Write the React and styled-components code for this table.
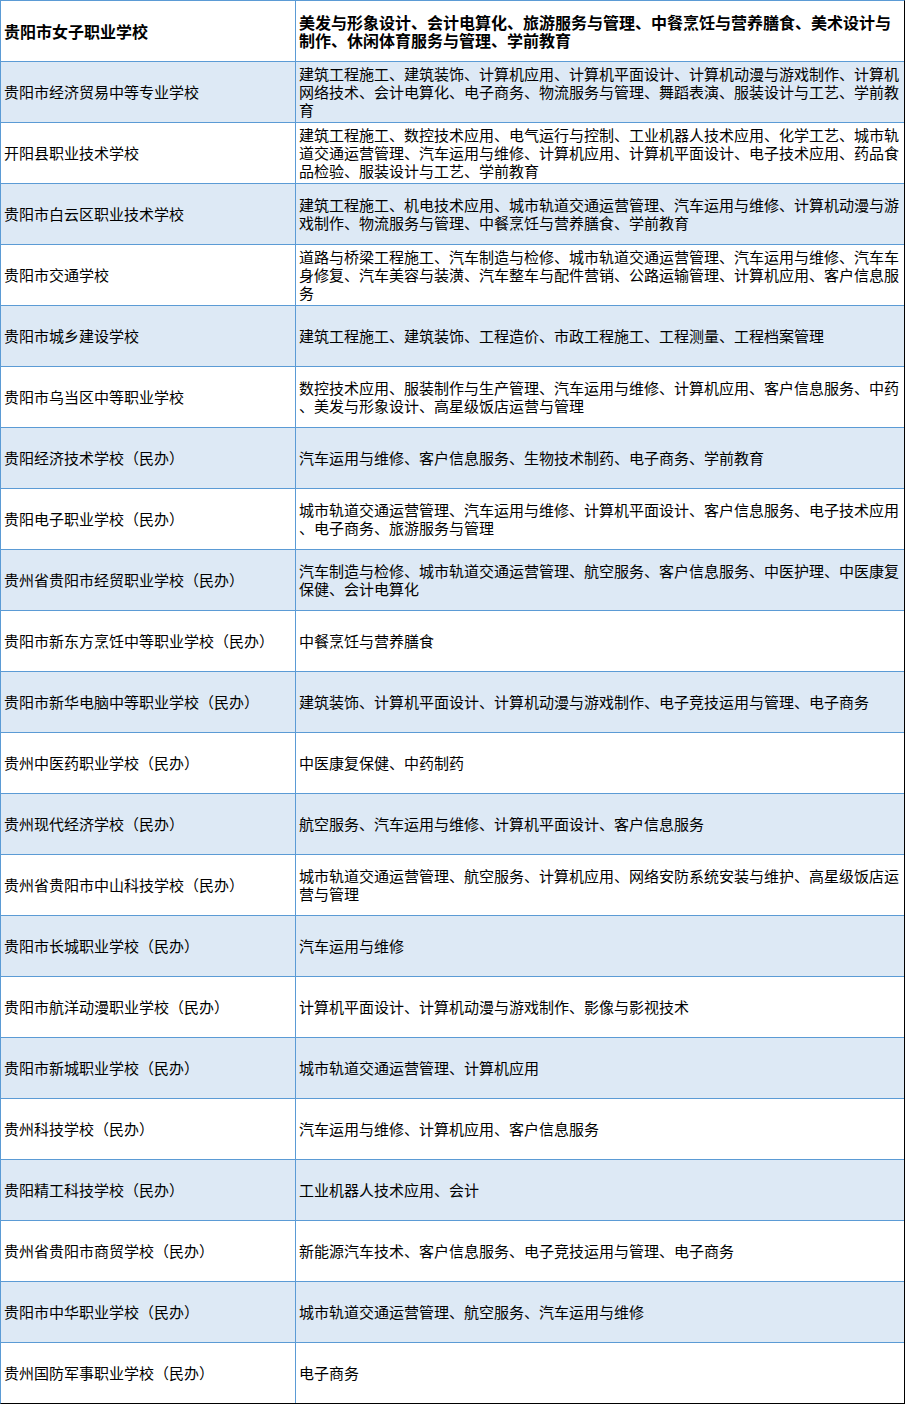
import styled, { createGlobalStyle } from "styled-components";

const GlobalStyle = createGlobalStyle`
  html, body {
    margin: 0;
    padding: 0;
    background: #fff;
  }
  body {
    font-family: "Noto Sans CJK SC", "Noto Sans", sans-serif;
    color: #000;
  }
`;

const Sheet = styled.div`
  width: 905px;
  box-sizing: border-box;
  border-top: 1px solid #5b9bd5;
  border-left: 1px solid #5b9bd5;
  border-right: 1px solid #000;
  border-bottom: 1px solid #000;
`;

const Row = styled.div`
  display: grid;
  grid-template-columns: 295px 1fr;
  height: 61px;
  box-sizing: border-box;
  border-bottom: 1px solid #5b9bd5;
  background: ${(p) => (p.$shaded ? "#dde9f5" : "#fff")};

  &:last-child {
    height: 60px;
    border-bottom: none;
  }
`;

const Cell = styled.div`
  display: flex;
  align-items: center;
  box-sizing: border-box;
  padding: 0 4px 0 3px;
  font-size: ${(p) => (p.$head ? "16px" : "15px")};
  font-weight: ${(p) => (p.$head ? 700 : 400)};
  line-height: 18px;
  line-break: anywhere;
  overflow: hidden;
`;

const SchoolCell = styled(Cell)`
  border-right: 1px solid #5b9bd5;
`;

const rows = [
  ["贵阳市女子职业学校", "美发与形象设计、会计电算化、旅游服务与管理、中餐烹饪与营养膳食、美术设计与制作、休闲体育服务与管理、学前教育"],
  ["贵阳市经济贸易中等专业学校", "建筑工程施工、建筑装饰、计算机应用、计算机平面设计、计算机动漫与游戏制作、计算机网络技术、会计电算化、电子商务、物流服务与管理、舞蹈表演、服装设计与工艺、学前教育"],
  ["开阳县职业技术学校", "建筑工程施工、数控技术应用、电气运行与控制、工业机器人技术应用、化学工艺、城市轨道交通运营管理、汽车运用与维修、计算机应用、计算机平面设计、电子技术应用、药品食品检验、服装设计与工艺、学前教育"],
  ["贵阳市白云区职业技术学校", "建筑工程施工、机电技术应用、城市轨道交通运营管理、汽车运用与维修、计算机动漫与游戏制作、物流服务与管理、中餐烹饪与营养膳食、学前教育"],
  ["贵阳市交通学校", "道路与桥梁工程施工、汽车制造与检修、城市轨道交通运营管理、汽车运用与维修、汽车车身修复、汽车美容与装潢、汽车整车与配件营销、公路运输管理、计算机应用、客户信息服务"],
  ["贵阳市城乡建设学校", "建筑工程施工、建筑装饰、工程造价、市政工程施工、工程测量、工程档案管理"],
  ["贵阳市乌当区中等职业学校", "数控技术应用、服装制作与生产管理、汽车运用与维修、计算机应用、客户信息服务、中药、美发与形象设计、高星级饭店运营与管理"],
  ["贵阳经济技术学校（民办）", "汽车运用与维修、客户信息服务、生物技术制药、电子商务、学前教育"],
  ["贵阳电子职业学校（民办）", "城市轨道交通运营管理、汽车运用与维修、计算机平面设计、客户信息服务、电子技术应用、电子商务、旅游服务与管理"],
  ["贵州省贵阳市经贸职业学校（民办）", "汽车制造与检修、城市轨道交通运营管理、航空服务、客户信息服务、中医护理、中医康复保健、会计电算化"],
  ["贵阳市新东方烹饪中等职业学校（民办）", "中餐烹饪与营养膳食"],
  ["贵阳市新华电脑中等职业学校（民办）", "建筑装饰、计算机平面设计、计算机动漫与游戏制作、电子竞技运用与管理、电子商务"],
  ["贵州中医药职业学校（民办）", "中医康复保健、中药制药"],
  ["贵州现代经济学校（民办）", "航空服务、汽车运用与维修、计算机平面设计、客户信息服务"],
  ["贵州省贵阳市中山科技学校（民办）", "城市轨道交通运营管理、航空服务、计算机应用、网络安防系统安装与维护、高星级饭店运营与管理"],
  ["贵阳市长城职业学校（民办）", "汽车运用与维修"],
  ["贵阳市航洋动漫职业学校（民办）", "计算机平面设计、计算机动漫与游戏制作、影像与影视技术"],
  ["贵阳市新城职业学校（民办）", "城市轨道交通运营管理、计算机应用"],
  ["贵州科技学校（民办）", "汽车运用与维修、计算机应用、客户信息服务"],
  ["贵阳精工科技学校（民办）", "工业机器人技术应用、会计"],
  ["贵州省贵阳市商贸学校（民办）", "新能源汽车技术、客户信息服务、电子竞技运用与管理、电子商务"],
  ["贵阳市中华职业学校（民办）", "城市轨道交通运营管理、航空服务、汽车运用与维修"],
  ["贵州国防军事职业学校（民办）", "电子商务"],
];

export default function App() {
  return (
    <>
      <GlobalStyle />
      <Sheet>
        {rows.map(([school, majors], i) => (
          <Row key={school} $shaded={i % 2 === 1}>
            <SchoolCell $head={i === 0}>{school}</SchoolCell>
            <Cell $head={i === 0}>{majors}</Cell>
          </Row>
        ))}
      </Sheet>
    </>
  );
}
